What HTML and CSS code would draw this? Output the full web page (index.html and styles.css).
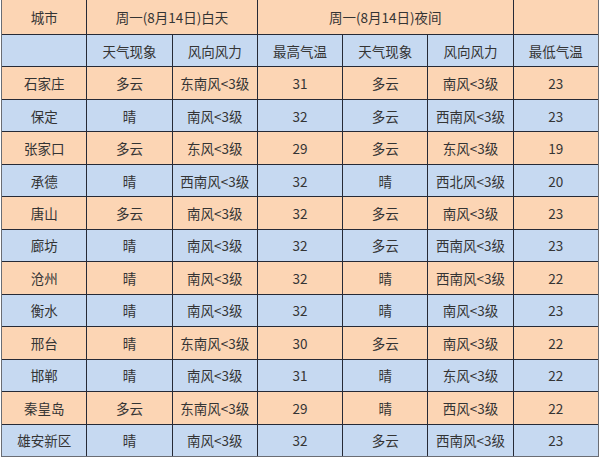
FILE: index.html
```html
<!DOCTYPE html>
<html lang="zh-CN">
<head>
<meta charset="utf-8">
<title>天气预报</title>
<link rel="stylesheet" href="styles.css">
</head>
<body>
<div class="sheet">
  <div class="grid">
    <div class="c o">城市</div>
    <div class="c o span2">周一(8月14日)白天</div>
    <div class="c o span3">周一(8月14日)夜间</div>
    <div class="c o"></div>

    <div class="c b"></div>
    <div class="c b">天气现象</div>
    <div class="c b">风向风力</div>
    <div class="c b">最高气温</div>
    <div class="c b">天气现象</div>
    <div class="c b">风向风力</div>
    <div class="c b">最低气温</div>

    <div class="c o">石家庄</div><div class="c o">多云</div><div class="c o">东南风&lt;3级</div><div class="c o">31</div><div class="c o">多云</div><div class="c o">南风&lt;3级</div><div class="c o">23</div>
    <div class="c b">保定</div><div class="c b">晴</div><div class="c b">南风&lt;3级</div><div class="c b">32</div><div class="c b">多云</div><div class="c b">西南风&lt;3级</div><div class="c b">23</div>
    <div class="c o">张家口</div><div class="c o">多云</div><div class="c o">东风&lt;3级</div><div class="c o">29</div><div class="c o">多云</div><div class="c o">东风&lt;3级</div><div class="c o">19</div>
    <div class="c b">承德</div><div class="c b">晴</div><div class="c b">西南风&lt;3级</div><div class="c b">32</div><div class="c b">晴</div><div class="c b">西北风&lt;3级</div><div class="c b">20</div>
    <div class="c o">唐山</div><div class="c o">多云</div><div class="c o">南风&lt;3级</div><div class="c o">32</div><div class="c o">多云</div><div class="c o">南风&lt;3级</div><div class="c o">23</div>
    <div class="c b">廊坊</div><div class="c b">晴</div><div class="c b">南风&lt;3级</div><div class="c b">32</div><div class="c b">多云</div><div class="c b">西南风&lt;3级</div><div class="c b">23</div>
    <div class="c o">沧州</div><div class="c o">晴</div><div class="c o">南风&lt;3级</div><div class="c o">32</div><div class="c o">晴</div><div class="c o">西南风&lt;3级</div><div class="c o">22</div>
    <div class="c b">衡水</div><div class="c b">晴</div><div class="c b">南风&lt;3级</div><div class="c b">32</div><div class="c b">晴</div><div class="c b">南风&lt;3级</div><div class="c b">23</div>
    <div class="c o">邢台</div><div class="c o">晴</div><div class="c o">东南风&lt;3级</div><div class="c o">30</div><div class="c o">多云</div><div class="c o">南风&lt;3级</div><div class="c o">22</div>
    <div class="c b">邯郸</div><div class="c b">晴</div><div class="c b">南风&lt;3级</div><div class="c b">31</div><div class="c b">晴</div><div class="c b">东风&lt;3级</div><div class="c b">22</div>
    <div class="c o">秦皇岛</div><div class="c o">多云</div><div class="c o">东南风&lt;3级</div><div class="c o">29</div><div class="c o">晴</div><div class="c o">西风&lt;3级</div><div class="c o">22</div>
    <div class="c b">雄安新区</div><div class="c b">晴</div><div class="c b">南风&lt;3级</div><div class="c b">32</div><div class="c b">多云</div><div class="c b">西南风&lt;3级</div><div class="c b">23</div>
  </div>
</div>
</body>
</html>
```

FILE: styles.css
```css
html, body {
  margin: 0;
  padding: 0;
  background: #ffffff;
}

.sheet {
  width: 596px;
  height: 456px;
  margin: -1px 0 0 1px;
  border: 1px solid #6a6d74;
  background: #ffffff;
}

.grid {
  display: grid;
  grid-template-columns: repeat(7, 1fr);
  grid-template-rows: 34px repeat(13, 1fr);
  gap: 1px;
  width: 100%;
  height: 100%;
  background: #262a36;
}

.c {
  display: flex;
  align-items: center;
  justify-content: center;
  font-family: "Noto Sans CJK SC", "Liberation Sans", sans-serif;
  font-size: 13.5px;
  color: #343434;
  white-space: nowrap;
}

.o {
  background: #fcd5b4;
}

.b {
  background: #c6d9f1;
}

.span2 {
  grid-column: span 2;
}

.span3 {
  grid-column: span 3;
}
```
